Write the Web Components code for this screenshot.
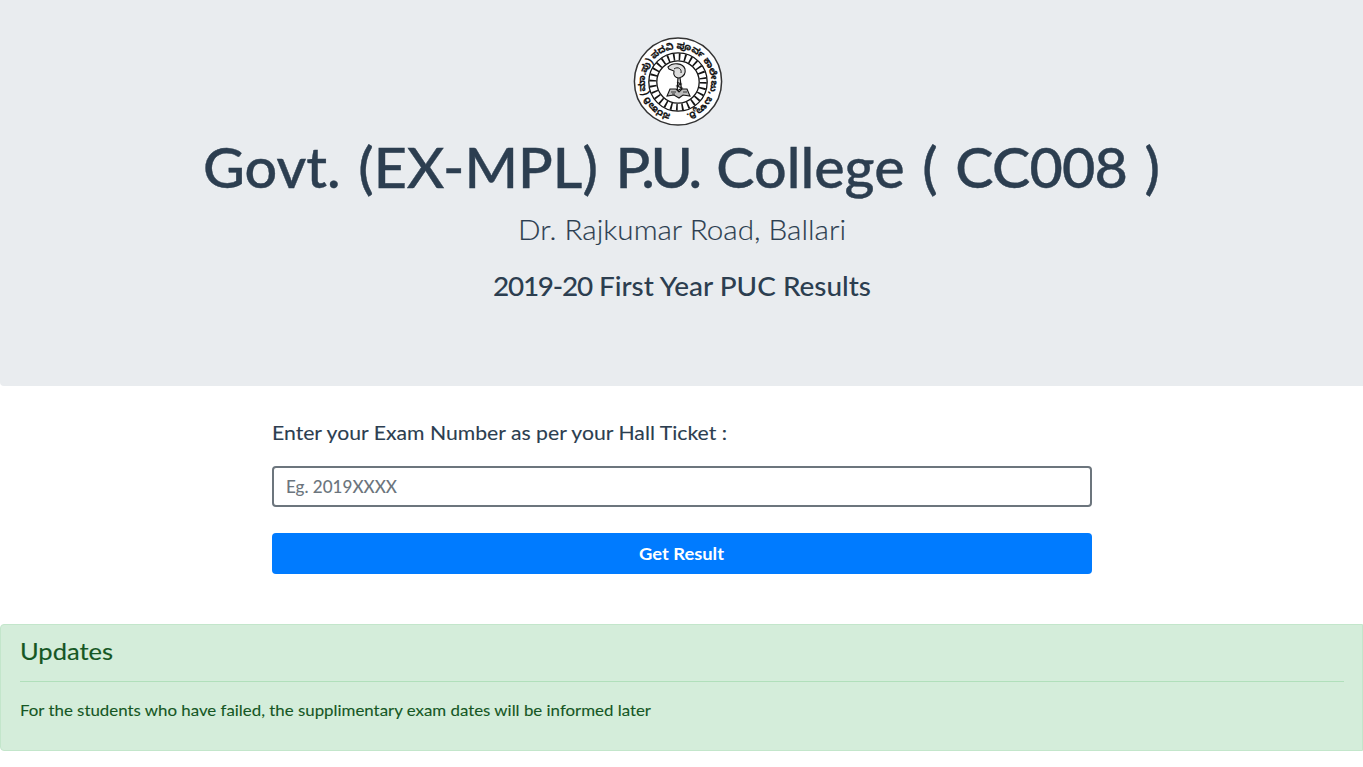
<!DOCTYPE html>
<html lang="en">
<head>
<meta charset="utf-8">
<title>PUC Results</title>
<style>
body{margin:0;background:#fff;color:#2c3e50;font-family:Lato,"Liberation Sans",sans-serif}
</style>
</head>
<body>
<results-page></results-page>
<script>
const define=(name,html,setup)=>{
  const t=document.createElement('template');t.innerHTML=html;
  customElements.define(name,class extends HTMLElement{
    constructor(){super();this.attachShadow({mode:'open'}).append(t.content.cloneNode(true));}
    connectedCallback(){if(setup)setup(this,this.shadowRoot);}
  });
};

/* A line of text widened to the measure given in its "measure" attribute. */
define('fitted-line',`<style>:host{display:inline-block;white-space:nowrap;vertical-align:top;text-align:left}span{display:inline-block;transform-origin:0 50%}</style><span><slot></slot></span>`,
(el,root)=>{
  const s=root.querySelector('span');
  const w=s.getBoundingClientRect().width,m=+el.getAttribute('measure');
  s.style.transform='scaleX('+m/w+')';
  el.style.width=m+'px';
});

/* College seal: lettered ring, spoked ring, lamp over an open book. */
define('college-seal',`<style>:host{display:block;width:90px;height:90px}svg{display:block;width:100%;height:100%}</style>
<svg viewBox="-45 -45 90 90" fill="none" stroke="#151515">
<circle r="43.6" cy="-.5" fill="#fff" stroke="#333" stroke-width="1.5"/>
<defs><path id="ring" d="M-7.5 32.1A33 33 0 1 1 7.5 32.1"/></defs>
<text font-size="9.2" font-weight="700" fill="#111" stroke="#111" stroke-width=".2" font-family="Noto Sans Kannada,Noto Sans,sans-serif"><textPath href="#ring" textLength="191">ಸರಕಾರಿ (ಮಾ.ಪು) ಪದವಿ ಪೂರ್ವ ಕಾಲೇಜು, ಬಳ್ಳಾರಿ.</textPath></text>
<circle r="29.2" stroke-width="1.3"/>
<circle r="25.2" stroke-width="7" stroke-dasharray="1.7 3.955"/>
<circle r="21.2" stroke-width="1.3"/>
<path d="M-10-15C-5-20 5-19 7-13C8-8 5-5 1-4C-3-4-5-7-4-11L-9-13Z" fill="#ddd" stroke-width="1.1"/>
<path d="M-4-13C0-16 4-13 3-9" stroke-width="1"/>
<path d="M0-4L-1 11M2-4L4 11M-1 0L3 2L-1 4L4 6L-1 9" stroke-width="1.3"/>
<path d="M-8 7L-2 7L1 10L4 7L9 7L12 14L5 13L1 16L-4 13L-11 14Z" fill="#bbb" stroke-width="1.1"/>
<path d="M-7 10L-2 10M5 10L9 10M-6 12L-3 12" stroke-width=".8"/>
</svg>`);

define('college-banner',`<style>
:host{display:flex;flex-direction:column;align-items:center;box-sizing:border-box;height:386px;padding-top:37px;background:#e9ecef;border-radius:0 0 0 4px}
college-seal{margin-right:7px}
h1,p,h2{margin:0}
h1{font-size:56px;font-weight:500;line-height:68px;margin-top:6px;word-spacing:3px;-webkit-text-stroke:.4px;stroke-linejoin:round}
.tight{letter-spacing:-3.2px}
.code{letter-spacing:-.8px}
p{font-size:26.5px;font-weight:300;line-height:40px;margin-top:9px;-webkit-text-stroke:.15px}
.road{letter-spacing:-.3px}
h2{font-size:27px;font-weight:500;line-height:32px;margin-top:20px}
.year{letter-spacing:-1.2px}
</style>
<college-seal></college-seal>
<h1><fitted-line measure="957">Govt. (EX-MPL) <span class="tight">P.U.</span> College ( <span class="code">CC008</span> )</fitted-line></h1>
<p><fitted-line measure="328">Dr. Rajkumar Road, Ballari</fitted-line></p>
<h2><fitted-line measure="378"><span class="year">2019-20</span> First Year PUC Results</fitted-line></h2>`);

define('result-form',`<style>
:host{display:block;width:820px;margin:0 auto;padding:35px 0 50px}
label{display:block;font-size:19.5px;font-weight:400;line-height:24px;height:45px;-webkit-text-stroke:.1px}
.field{box-sizing:border-box;height:41px;padding:0 12px;border:2px solid #6c757d;border-radius:4px;font-size:17.5px;line-height:37px;color:#6c757d;font-weight:500}
button{display:block;width:100%;height:41px;margin-top:26px;padding:0;border:0;border-radius:4px;background:#007bff;color:#fff;font:700 17.5px/41px Lato,sans-serif}
</style>
<label><fitted-line measure="455">Enter your Exam Number as per your Hall Ticket :</fitted-line></label>
<div class="field"><fitted-line measure="111">Eg. 2019XXXX</fitted-line></div>
<button><fitted-line measure="85">Get Result</fitted-line></button>`);

define('updates-alert',`<style>
:host{display:block;box-sizing:border-box;height:127px;padding:12px 18px 0 19px;border:1px solid #c3e6cb;border-radius:4px 0 0 4px;background:#d4edda;color:#155724}
h4{margin:0;font-size:23.5px;font-weight:400;line-height:28px;-webkit-text-stroke:.15px}
hr{margin:16px 0;border:0;border-top:1px solid #b1dfbb}
p{margin:0;font-size:16px;font-weight:400;line-height:24px;-webkit-text-stroke:.1px}
</style>
<h4><fitted-line measure="93">Updates</fitted-line></h4><hr>
<p><fitted-line measure="631">For the students who have failed, the supplimentary exam dates will be informed later</fitted-line></p>`);

define('results-page',`<style>:host{display:block}</style>
<college-banner></college-banner><result-form></result-form><updates-alert></updates-alert>`);
</script>
</body>
</html>
